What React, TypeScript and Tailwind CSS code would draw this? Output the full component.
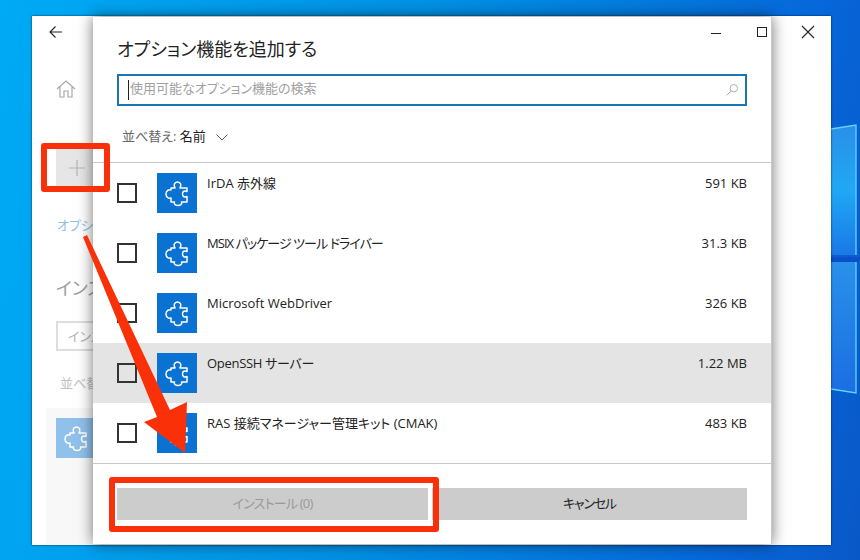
const jp = "font-['Open_Sans','Noto_Sans_CJK_JP',sans-serif]";

function Puzzle({ className = '' }: { className?: string }) {
  return (
    <svg viewBox="0 0 40 40" className={className} fill="none" stroke="white" strokeWidth="1.5" strokeLinejoin="round">
      <path d="M14 15 H18 C16.5 12.5 17 9 20.5 9 C24 9 24.5 12.5 23 15 H30 V18.5 C27.5 17.5 25.5 18 25.5 21 C25.5 24 27.5 24.5 30 23.5 V29 H24.5 C25.5 31 23.5 32.5 21 32.5 C18.5 32.5 16.5 31 17.5 29 H14 V25 C12 26 9 24.5 9 21 C9 17.5 12 16 14 17 Z" />
    </svg>
  );
}

const rows = [
  { name: 'IrDA 赤外線', size: '591 KB', cls: '' },
  { name: 'MSIX パッケージ ツール ドライバー', size: '31.3 KB', cls: 'tracking-[-0.95px]' },
  { name: 'Microsoft WebDriver', size: '326 KB', cls: '' },
  { name: 'OpenSSH サーバー', size: '1.22 MB', cls: 'tracking-[-0.3px]', hover: true },
  { name: 'RAS 接続マネージャー管理キット (CMAK)', size: '483 KB', cls: '' },
];

export default function App() {
  return (
    <div className={`relative w-[860px] h-[560px] overflow-hidden bg-[linear-gradient(100deg,#00aaf4_0%,#0092e6_45%,#0668da_85%,#0a58c8_100%)] ${jp} [font-feature-settings:'palt']`}>
      {/* Windows logo panes on the wallpaper */}
      <svg className="absolute left-0 top-0" width="860" height="560">
        <defs>
          <linearGradient id="paneA" x1="0" y1="0" x2="0" y2="1">
            <stop offset="0" stopColor="#2a8fe8" />
            <stop offset="0.5" stopColor="#1fa8f5" />
            <stop offset="1" stopColor="#1a78e6" />
          </linearGradient>
          <linearGradient id="paneB" x1="0" y1="0" x2="0" y2="1">
            <stop offset="0" stopColor="#2a90ea" />
            <stop offset="1" stopColor="#1a6ee2" />
          </linearGradient>
        </defs>
        <rect x="831" y="257" width="29" height="5" fill="#0a50c8" />
        <polygon points="831,129 856,125 856,255 831,255" fill="url(#paneA)" />
        <polygon points="831,262 856,262 856,393 831,389" fill="url(#paneB)" />
        <path d="M831 129 L856 125 V255" fill="none" stroke="#62d4f8" strokeWidth="1.3" />
        <path d="M856 262 V393 L831 389" fill="none" stroke="#62d4f8" strokeWidth="1.3" />
      </svg>

      {/* Settings window behind */}
      <div className="absolute left-[32px] top-[16px] w-[799px] h-[529px] bg-white shadow-[0_0_2px_rgba(0,0,0,0.7)]">
        <svg className="absolute left-[17px] top-[9px]" width="14" height="14" viewBox="0 0 14 14" fill="none" stroke="#222" strokeWidth="1.1">
          <path d="M13 7 H1 M6.5 1.5 L1 7 L6.5 12.5" />
        </svg>
        <svg className="absolute left-[24px] top-[64px]" width="20" height="18" viewBox="0 0 20 18" fill="none" stroke="#a8a8a8" strokeWidth="1.2">
          <path d="M1 9 L10 1 L19 9 M4 7 V17 H8 V11 H12 V17 H16 V7" />
        </svg>
        <div className="absolute left-[24px] top-[133px] w-[50px] h-[38px] bg-[#e6e6e6] flex items-center justify-center pr-[8px]">
          <svg width="16" height="16" viewBox="0 0 16 16" stroke="#b5b5b5" strokeWidth="1.2"><path d="M8 0 V16 M0 8 H16" /></svg>
        </div>
        <div className="absolute left-[25px] top-[199px] text-[13px] leading-[20px] text-[#8cc0e8] whitespace-nowrap">オプション</div>
        <div className="absolute left-[24px] top-[259px] text-[18px] leading-[26px] text-[#a0a0a0] whitespace-nowrap">インストール</div>
        <div className="absolute left-[24px] top-[305px] w-[140px] h-[30px] border-2 border-[#dedede] pl-[10px] text-[13px] leading-[26px] text-[#b5b5b5] whitespace-nowrap">インストール</div>
        <div className="absolute left-[28px] top-[357px] text-[13px] leading-[20px] text-[#c0c0c0] whitespace-nowrap">並べ替え</div>
        <div className="absolute left-[14px] top-[392px] w-[60px] h-[137px] bg-[#f8f8f8] pt-[10px] pl-[10px]">
          <div className="w-[40px] h-[40px] bg-[#90c1eb]"><Puzzle className="w-[40px] h-[40px]" /></div>
        </div>
        <svg className="absolute left-[769px] top-[9px]" width="14" height="14" viewBox="0 0 14 14" stroke="#222" strokeWidth="1.1"><path d="M1 1 L13 13 M13 1 L1 13" /></svg>
      </div>

      {/* Add feature dialog */}
      <div className="absolute left-[93px] top-[17px] w-[679px] h-[527px] bg-white flex flex-col border-r border-[#c8c8c8] shadow-[0_0_14px_rgba(0,0,0,0.55)]">
        <div className="absolute left-[618px] top-[16px] w-[10px] h-px bg-[#222]" />
        <div className="absolute left-[664px] top-[10px] w-[10px] h-[10px] border border-[#222]" />
        <h1 className="pl-[24px] pt-[20px] h-[57px] text-[18px] leading-[25px] text-[#222]">オプション機能を追加する</h1>
        <div className="mx-[24px] w-[630px] h-[32px] border-2 border-[#1a75b0] flex items-center pl-[9px] pr-[7px] shrink-0">
          <div className="w-px h-[20px] bg-[#222] mr-[1px]" />
          <span className="flex-1 text-[13px] text-[#a0a0a0] pb-[2px]">使用可能なオプション機能の検索</span>
          <svg width="12" height="12" viewBox="0 0 12 12" fill="none" stroke="#b0b0b0" strokeWidth="1"><circle cx="7.8" cy="4.2" r="3.7" /><path d="M5 7 L0.5 11.5" /></svg>
        </div>
        <div className="pl-[29px] pt-[6px] h-[56px] flex items-center text-[13px] text-[#666] gap-[10px] shrink-0">
          <span>並べ替え: <span className="text-[#222]">名前</span></span>
          <svg width="12" height="7" viewBox="0 0 12 7" fill="none" stroke="#555"><path d="M0.5 0.5 L6 6 L11.5 0.5" /></svg>
        </div>
        <div className="border-t border-b border-[#c8c8c8] shrink-0">
          {rows.map((r) => (
            <div key={r.name} className={`h-[60px] flex pl-[24px] pr-[24px] ${r.hover ? 'bg-[#e4e4e4]' : ''}`}>
              <div className="w-[20px] h-[20px] border-2 border-[#333] mt-[20px] shrink-0" />
              <div className="w-[40px] h-[40px] bg-[#0a72d2] ml-[20px] mt-[10px] shrink-0"><Puzzle className="w-[40px] h-[40px]" /></div>
              <div className={`flex-1 ml-[10px] mt-[10px] text-[13px] leading-[20px] text-[#222] ${r.cls}`}>{r.name}</div>
              <div className="mt-[10px] text-[13px] leading-[20px] text-[#222]">{r.size}</div>
            </div>
          ))}
        </div>
        <div className="mx-[24px] mt-[24px] grid grid-cols-[311px_315px] gap-[4px] text-[13px] h-[32px]">
          <div className="bg-[#cccccc] text-[#999999] flex items-center justify-center tracking-[-0.8px]">インストール (0)</div>
          <div className="bg-[#cccccc] text-[#222] flex items-center justify-center tracking-[-1.2px]">キャンセル</div>
        </div>
      </div>

      {/* Annotations */}
      <div className="absolute left-[41px] top-[143px] w-[69px] h-[49px] border-[6px] border-[#fa3008] rounded-[3px]" />
      <div className="absolute left-[109px] top-[477px] w-[330px] h-[55px] border-[6px] border-[#fa3008] rounded-[3px]" />
      <svg className="absolute left-0 top-0" width="860" height="560">
        <polygon points="83,237 87,235 170,410 187,402 185,453 144,422 157,417" fill="#fa3008" />
      </svg>
    </div>
  );
}
